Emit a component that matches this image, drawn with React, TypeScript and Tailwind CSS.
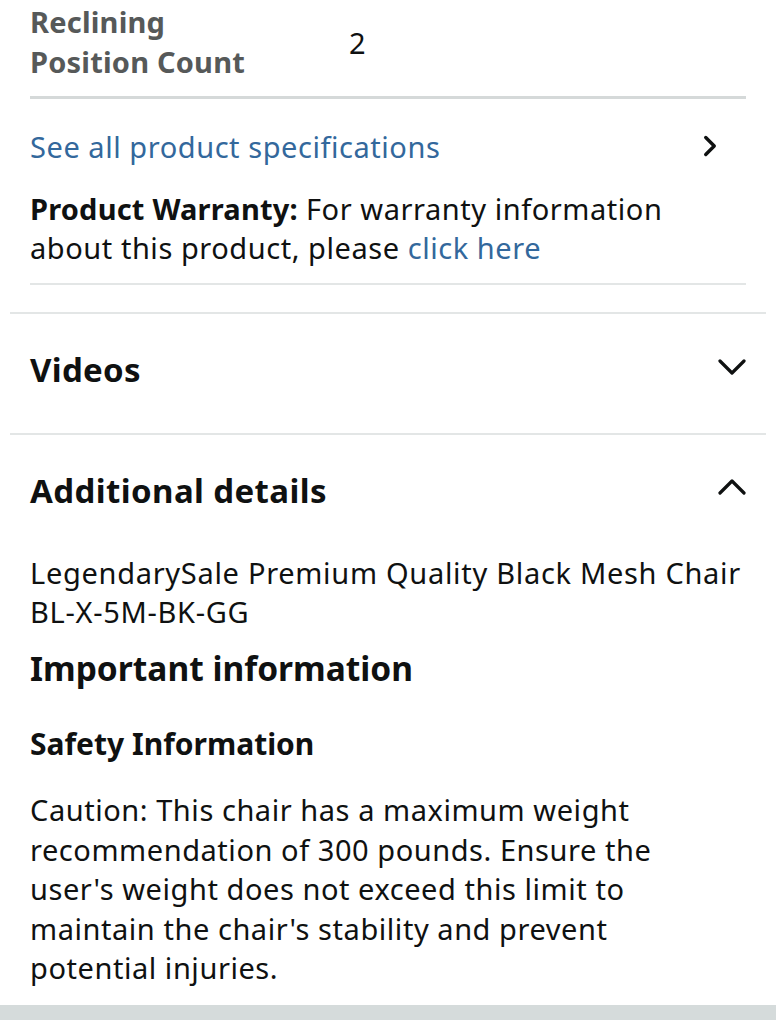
import { ChevronRight } from 'lucide-react';

const Chevron = ({ dir }: { dir: 'down' | 'up' }) => (
    <svg width="28" height="18" viewBox="0 0 28 18" fill="none" className="shrink-0 mb-[14px]">
        {dir === 'down'
            ? <path d="M2 3 L14 15 L26 3" stroke="#0f1111" strokeWidth="3.2" strokeLinecap="round" strokeLinejoin="round" />
            : <path d="M2 15 L14 3 L26 15" stroke="#0f1111" strokeWidth="3.2" strokeLinecap="round" strokeLinejoin="round" />}
    </svg>
);

const App = () => {
    return (
        <div className="w-[776px] h-[1020px] bg-white overflow-hidden flex flex-col text-[#0f1111] font-['Noto_Sans','Open_Sans',sans-serif] text-[29px] leading-[39px] tracking-[0.55px]">

            {/* spec tail + warranty */}
            <div className="px-[30px] pt-[2px]">
                <div className="flex items-center">
                    <div className="w-[319px] font-bold text-[#565959] leading-[40px] tracking-[0.2px]">
                        Reclining<br />Position Count
                    </div>
                    <div>2</div>
                </div>
                <div className="mt-[14px] h-[3px] bg-[#d5d9d9]" />

                <div className="mt-[27px] h-[40px] flex items-center justify-between">
                    <span className="text-[#33689c]">See all product specifications</span>
                    <ChevronRight className="w-[34px] h-[34px] mr-[19px]" strokeWidth={2.4} color="#0f1111" />
                </div>

                <p className="mt-[23px] pr-[40px]">
                    <span className="font-bold tracking-[0.2px]">Product Warranty:</span> For warranty information about this product, please <span className="text-[#33689c]">click here</span>
                </p>
                <div className="mt-[16px] h-[2px] bg-[#e3e6e6]" />
            </div>

            <div className="mx-[10px] mt-[27px] h-[2px] bg-[#e3e6e6]" />

            {/* Videos */}
            <div className="px-[30px] h-[119px] flex items-center justify-between">
                <h2 className="font-bold text-[33px] tracking-[0.3px] mb-[8px]">Videos</h2>
                <Chevron dir="down" />
            </div>

            <div className="mx-[10px] h-[2px] bg-[#e3e6e6]" />

            {/* Additional details */}
            <div className="px-[30px] h-[118px] flex items-center justify-between">
                <h2 className="font-bold text-[33px] tracking-[0.4px] mb-[8px]">Additional details</h2>
                <Chevron dir="up" />
            </div>

            <div className="px-[30px]">
                <p className="-mr-[20px] tracking-[0.7px]">LegendarySale Premium Quality Black Mesh Chair BL-X-5M-BK-GG</p>
                <h3 className="mt-[15px] font-bold text-[33.5px] leading-[44px] tracking-normal">Important information</h3>
                <h4 className="mt-[34px] font-bold text-[30px] leading-[40px] tracking-normal">Safety Information</h4>
                <p className="mt-[26px] pr-[60px] leading-[39.5px]">
                    Caution: This chair has a maximum weight recommendation of 300 pounds. Ensure the user's weight does not exceed this limit to maintain the chair's stability and prevent potential injuries.
                </p>
            </div>

            <div className="mt-auto h-[15px] bg-[#d5dbdb]" />
        </div>
    );
};

export default App;
